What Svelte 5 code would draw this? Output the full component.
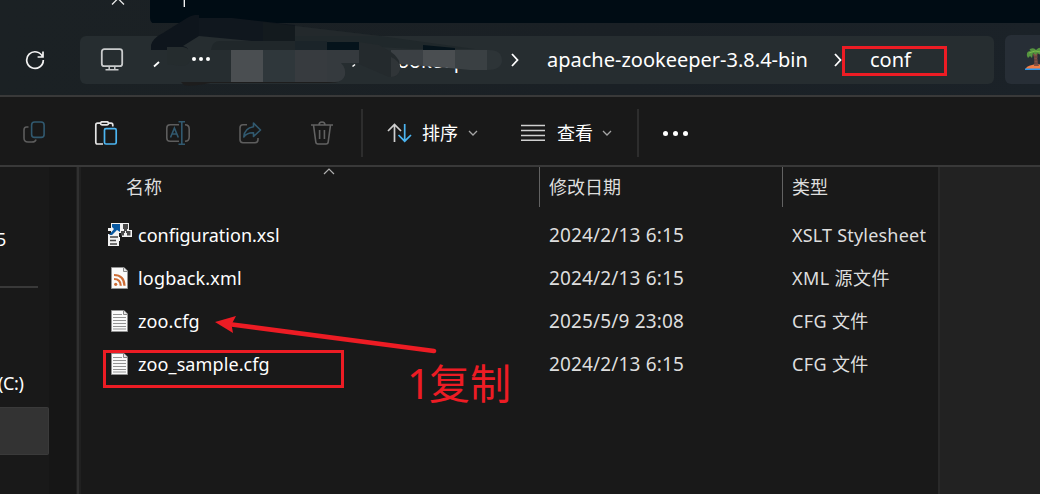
<script>
  const files = [
    { icon: 'xsl', name: 'configuration.xsl', date: '2024/2/13 6:15', type: 'XSLT Stylesheet', ls: 0, ts: 0.2 },
    { icon: 'xml', name: 'logback.xml', date: '2024/2/13 6:15', type: 'XML 源文件', ls: 0.18, ts: 0.4 },
    { icon: 'cfg', name: 'zoo.cfg', date: '2025/5/9 23:08', type: 'CFG 文件', ls: 0.12, ts: 0.35 },
    { icon: 'cfg', name: 'zoo_sample.cfg', date: '2024/2/13 6:15', type: 'CFG 文件', ls: 0.1, ts: 0.35 }
  ];
</script>

<div class="window">
  <header>
    <div class="tabs">
      <svg class="tabicons" width="210" height="24" fill="none">
        <path d="M150 0H210V24H156Q150 24 150 17Z" fill="#000c14" />
        <path d="M112 4.5 118-1.5 124 4.5" stroke="#e8e8e8" stroke-width="1.3" />
        <path d="M184.3 0V7" stroke="#fff" stroke-width="1.3" />
      </svg>
      <div class="strip"></div>
    </div>
    <div class="nav">
      <svg class="refresh" width="20" height="20" fill="none" stroke="#f2f2f2" stroke-width="1.7">
        <path d="M17.7 7A8.3 8.3 0 1 0 18.3 10M18 1.5V7H12.6" />
      </svg>
      <div class="address">
        <svg class="monitor" width="24" height="24" fill="none" stroke="#c9cbcc" stroke-width="1.8">
          <rect x="1.8" y="1.2" width="20.4" height="17" rx="2.5" /><path d="M5.5 21.8H18.5M9.2 18V21.8M14.8 18V21.8" stroke-width="1.5" />
        </svg>
        <span class="more-path"><i></i><i></i><i></i></span>
        <span class="crumb hidden-crumb">zookeep</span>
        <svg class="chev first" width="8" height="14" fill="none" stroke="#fff" stroke-width="1.8"><path d="m1 1 5.5 6L1 13" /></svg>
        <span class="crumb main-crumb">apache-zookeeper-3.8.4-bin</span>
        <svg class="chev second" width="8" height="14" fill="none" stroke="#fff" stroke-width="1.8"><path d="m1 1 5.5 6L1 13" /></svg>
        <span class="crumb conf">conf</span>
      </div>
      <div class="search">
        <svg width="16" height="24" viewBox="0 0 16 24">
          <path d="M0 23Q1 19 7 18 13 16 16 18V23Z" fill="#f27d45" /><path d="M0 21.5H16V23H0Z" fill="#2695ef" />
          <path d="M9 6 13 5Q11 12 14 19L9 19Q10 12 8 7Z" fill="#805044" /><path d="M9 10H13M9 13H13M9 16H13" stroke="#5f3e3b" />
          <path d="M2 9Q1 4 6 4 4 3 5 2 9 0 11 3 14 0 16 1V8L12 6 11 8 8 6 7 11 5 9 3 11Z" fill="#55943f" /><path d="M4 6 10 4 16 5" stroke="#79b74b" fill="none" />
        </svg>
      </div>
    </div>
    <svg class="redaction" width="380" height="75" viewBox="140 15 380 75">
      <path d="M151 50V45Q153 38 163 33L187 18Q194 14 199 15V36L183 46Q188 47 188 50Z" fill="#0e151c" />
      <path d="M199 18H232L295 25V41H252L199 36Z" fill="#10171e" />
      <path d="M263 22 295 26V41H263Z" fill="#131a1e" />
      <path d="M295 26 380 36 475 49H413L295 42Z" fill="#20282b" />
      <path d="M295 26 380 36H295Z" fill="#23292c" />
      <path d="M211 50Q212 41 220 41H296V50Z" fill="#20272a" />
      <path d="M295 41H327V50H295Z" fill="#1b2429" /><path d="M327 42H359V50H327Z" fill="#05131b" />
      <path d="M423 45 455 48V50H423Z" fill="#05131b" />
      <path d="M167 47H183Q191 48 191 57 190 66 181 66L167 64Z" fill="#252c2e" />
      <path d="M181 82H338Q334 83 320 83H210Q190 87 184 85Z" fill="#1d1d1d" />
      <path d="M231 50H263V82H231Z" fill="#4a4e51" /><path d="M263 50H295V82H263Z" fill="#2f373b" />
      <path d="M295 50H327V82H295Z" fill="#373b3f" /><path d="M327 50H359V63H341Q346 68 345 75 343 82 335 82H327Z" fill="#353a3e" />
      <path d="M391 50H423V66L400 64 391 62Z" fill="#3b4044" />
      <path d="M423 50H455V68.5L423 66Z" fill="#4a4e51" /><path d="M455 50H487V70L470 70 455 68.5Z" fill="#3a4043" />
      <path d="M487 50Q502 49 502 61 501 70 487 70Z" fill="#2d3437" />
      <path d="M359 42 379 45 391 52Q401 58 400 70 398 78 389 77L359 64Z" fill="#242a2d" />
      <path d="M391 57Q401 61 400 70 398 77 391 77Z" fill="#303538" />
      <path d="m154 66.5 5-4.5" stroke="#fff" stroke-width="1.8" /><path d="m352.5 66.5 2.5-2" stroke="#fff" stroke-width="1.6" />
    </svg>
    <div class="mark conf-mark"></div>
  </header>

  <div class="toolbar">
    <div class="tools">
      <svg width="24" height="24" fill="none" stroke-width="1.6">
        <path d="M6.5 6H4.5Q2 6 2 9V17Q2 21 6 21H10Q13.5 21 14 18.5" stroke="#5d5d5d" /><rect x="9.6" y="1" width="12.5" height="15.4" rx="3" stroke="#31596f" />
      </svg>
      <svg width="24" height="24" fill="none" stroke-width="1.7">
        <path d="M6 2.2H3.5Q1.8 2.2 1.8 4V21.3Q1.8 23 3.5 23H9M15 2.2H17Q18.8 2.2 18.8 4V5.5" stroke="#e4e4e4" /><rect x="6.5" y=".8" width="8" height="3" rx="1.5" stroke="#e4e4e4" /><rect x="10.5" y="7.6" width="11.7" height="15.4" rx="1.5" stroke="#4cb5f1" />
      </svg>
      <svg width="24" height="24" fill="none" stroke-width="1.6">
        <path d="M13 3.7H4Q.8 3.7.8 7V17Q.8 20.3 4 20.3H13M19 3.7Q23.2 3.7 23.2 8V16Q23.2 20.3 19 20.3" stroke="#5d5d5d" /><path d="M4.5 16.5 8.4 7 12.3 16.5M6 13H11M12.5.8H19M15.8.8V23.2M12.5 23.2H19" stroke="#31596f" />
      </svg>
      <svg width="24" height="24" fill="none" stroke-width="1.6">
        <path d="M9 3.8H5Q2 3.8 2 7V18.5Q2 21.7 5 21.7H17Q20 21.7 20 18.5V17" stroke="#5d5d5d" /><path d="M15.5 2 22.5 9 15.5 15.5V11.8Q9 11.5 5.8 16 6.5 7 15.5 5.8Z" stroke="#31596f" stroke-linejoin="round" />
      </svg>
      <svg width="24" height="24" fill="none" stroke="#626262" stroke-width="1.6">
        <path d="M1 4H23M3.5 4 5.8 21Q6 23 8 23H16Q18 23 18.2 21L20.5 4M9 4Q9 1 12 1T15 4M9.6 9V18M14.4 9V18" />
      </svg>
    </div>
    <div class="divider"></div>
    <button class="sort">
      <svg width="26" height="20" fill="none" stroke-width="1.7"><path d="M1 8 7.5 1.5 14 8M7.5 1.5V19" stroke="#cfcfcf" /><path d="M11.5 12 17.7 18.2 24 12M17.7 18V1" stroke="#4cb5f1" /></svg>
      <span>排序</span><svg class="down" width="10" height="6" fill="none" stroke="#a5a5a5" stroke-width="1.3"><path d="m1 1 4 4 4-4" /></svg>
    </button>
    <button class="view">
      <svg width="24" height="18" stroke="#cfcfcf" stroke-width="1.6"><path d="M0 1.5H24M0 6.5H24M0 11.5H24M0 16.2H24" /></svg>
      <span>查看</span><svg class="down" width="10" height="6" fill="none" stroke="#a5a5a5" stroke-width="1.3"><path d="m1 1 4 4 4-4" /></svg>
    </button>
    <div class="divider second-divider"></div>
    <div class="dots"><i></i><i></i><i></i></div>
  </div>

  <div class="body">
    <aside>
      <div class="side-item five"><span>5</span></div>
      <div class="side-line"></div>
      <div class="side-item drive"><span>(C:)</span></div>
      <div class="side-selected"></div>
    </aside>
    <main>
      <div class="row head">
        <div class="name">名称</div><div class="date">修改日期</div><div class="type">类型</div>
        <svg class="up" width="12" height="7" fill="none" stroke="#b0b0b0" stroke-width="1.2"><path d="m1 6 5-5 5 5" /></svg>
      </div>
      {#each files as f}
        <div class="row">
          <div class="name">
            {#if f.icon === 'xsl'}
              <svg width="24" height="24" viewBox="0 0 24 24">
                <path d="M3 0H21V7H24V14H14V10H11V14H12V18H11V23H0V11H3V8H0V5H3Z" fill="#f2f2f2" />
                <path d="M4 1H12V9L9 7 4 12H1L6 6 4 4Z" fill="#0858a0" />
                <path d="M15 1H20V6H19V8H22.5V12.5H19V10H18V8H17V10H16V12.5H13V8H16V6H15Z" fill="#4a4a4a" />
                <path d="M2 14H10M2 17.5H8M2 21H9" stroke="#444" stroke-width="1.5" />
              </svg>
            {:else}
              <svg width="24" height="24" viewBox="0 0 24 24">
                <path d="M3.5 1.5H16L19.5 5V22.5H3.5Z" fill="#fafafa" stroke="#929292" /><path d="M15.5 1.5V5.5H19.5" fill="#e8e8e8" stroke="#858585" />
                {#if f.icon === 'xml'}
                  <circle cx="7.7" cy="18.3" r="1.6" fill="#cd6d36" /><path d="M6 13Q12.5 13 12.8 19.7M6 9Q16 9 16.5 19.7" fill="none" stroke="#cd6d36" stroke-width="2.2" />
                {:else}
                  <path d="M5 5.5H14M5 8.5H18M5 11.5H18M5 14.5H18M5 17.5H18M5 20H18" stroke="#949494" />
                {/if}
              </svg>
            {/if}
            <span style:letter-spacing="{f.ls}px">{f.name}</span>
          </div>
          <div class="date">{f.date}</div>
          <div class="type" style:letter-spacing="{f.ts}px">{f.type}</div>
        </div>
      {/each}
    </main>
    <div class="preview"></div>
    <div class="mark file-mark"></div>
    <svg class="arrow" width="230" height="45" viewBox="210 312 230 45"><path d="M434 351 230 324.2" stroke="#ed1c24" stroke-width="4.6" stroke-linecap="round" /><path d="M215 322 236 316 231.5 324.5 233 333Z" fill="#ed1c24" /></svg>
    <div class="note"><span>1</span>复制</div>
  </div>
</div>

<style>
  :global(body) { margin: 0; background: #191919; overflow: hidden; }
  * { box-sizing: border-box; }
  svg { flex: none; display: block; }
  .window { width: 1040px; height: 494px; overflow: hidden; background: #191919; color: #fff; font: 18px "Noto Sans", "Noto Sans CJK SC", sans-serif; display: flex; flex-direction: column; }
  header { position: relative; height: 97px; flex: none; background: linear-gradient(90deg, #1b2124, #1a2025 60%, #1b2228); border-bottom: 2px solid #393939; }
  .tabs { height: 23px; display: flex; }
  .tabs svg { height: 23px; }
  .strip { flex: 1; background: #000c14; }
  .nav { display: flex; padding-top: 13px; align-items: flex-start; }
  .refresh { margin: 14px 0 0 25px; }
  .address { width: 914px; height: 48px; margin-left: 35px; border-radius: 6px; background: #262d30; display: flex; align-items: center; }
  .monitor { margin: -1px 0 0 20px; }
  .more-path { display: flex; gap: 3px; margin: -3px 0 0 68px; }
  .more-path i { width: 4px; height: 4px; border-radius: 50%; background: #fff; }
  .crumb { font-size: 20px; line-height: 28px; white-space: nowrap; color: #fff; }
  .hidden-crumb { margin: 2px 0 0 178px; width: 102px; letter-spacing: -.2px; }
  .chev.first { margin-left: 21px; }
  .main-crumb { margin-left: 28px; width: 262px; }
  .chev.second { margin-left: 25px; }
  .conf { margin-left: 28px; }
  .search { height: 49px; width: 35px; margin: -1px 0 0 11px; border-radius: 6px 0 0 6px; background: #272e36; padding: 12px 0 0 20px; overflow: hidden; }
  .redaction { position: absolute; left: 140px; top: 15px; }
  .mark { position: absolute; border: 3px solid #ed1c24; }
  .conf-mark { left: 842px; top: 46px; width: 105px; height: 30px; }
  .toolbar { height: 70px; flex: none; border-bottom: 2px solid #393939; display: flex; align-items: center; padding: 4px 0 0; }
  .tools { display: flex; gap: 48px; padding-left: 22px; }
  .divider { width: 2px; height: 48px; background: #2d2d2d; margin-left: 27px; }
  button { border: 0; background: none; padding: 0; color: #fff; font: inherit; display: flex; align-items: center; }
  .sort { margin-left: 24px; }
  .sort span, .view span { line-height: 26px; width: 36px; }
  .sort span { margin-left: 9px; }
  .down { margin-left: 10px; }
  .view { margin-left: 43px; }
  .view span { margin-left: 12px; }
  .view .down { margin-left: 9px; }
  .second-divider { margin-left: 25px; }
  .dots { display: flex; gap: 5px; margin: 0 0 0 24px; }
  .dots i { width: 5px; height: 5px; border-radius: 50%; background: #fff; }
  .body { position: relative; flex: 1; display: flex; min-height: 0; }
  aside { width: 81px; flex: none; padding-top: 60px; background: linear-gradient(90deg, #191919 49px, #161616 49px 76px, #202020 76px 77px, #303030 77px 79px, #202020 79px); }
  .side-item { height: 24px; line-height: 24px; overflow: hidden; }
  .five span { margin-left: -4px; }
  .side-line { width: 38px; height: 2px; background: #393939; margin-top: 35px; }
  .drive { margin-top: 83px; }
  .drive span { margin-left: -2px; letter-spacing: -.4px; }
  .side-selected { width: 49px; height: 48px; margin-top: 12px; background: #333; border-radius: 0 2px 2px 0; border: 1px solid #3a3a3a; border-left: 0; }
  main { width: 857px; flex: none; }
  .row { display: grid; grid-template-columns: 458px 243px 156px; height: 43px; align-items: center; }
  .head { height: 40px; margin-bottom: 6px; position: relative; color: #dedede; }
  .name { display: flex; align-items: center; padding-left: 27px; color: #fff; white-space: pre; }
  .name span { margin-left: 6px; }
  .date, .type { color: #dedede; padding-left: 10px; white-space: pre; line-height: 24px; }
  .date { font-size: 19px; letter-spacing: .16px; }
  .head div { height: 40px; line-height: 40px; letter-spacing: 0; font-size: 18px; }
  .head .name { padding-left: 45px; color: #dedede; }
  .head .date, .head .type { border-left: 1px solid #626262; padding-left: 9px; }
  .up { position: absolute; left: 242px; top: 1px; }
  .preview { flex: 1; background: #222; border-left: 2px solid #292929; }
  .file-mark { left: 103px; top: 183px; width: 241px; height: 38px; }
  .arrow { position: absolute; left: 210px; top: 145px; }
  .note { position: absolute; left: 407px; top: 187px; font: 41px/58px "Noto Sans", "Noto Sans CJK SC", sans-serif; color: #ed1c24; display: flex; white-space: nowrap; }
  .note span { width: 22px; }
</style>
